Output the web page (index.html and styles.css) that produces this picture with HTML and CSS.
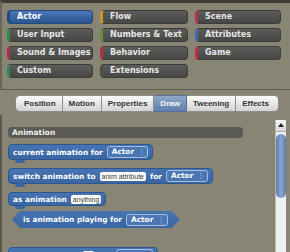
FILE: index.html
```html
<!DOCTYPE html>
<html lang="en">

<head>
    <meta charset="UTF-8">
    <title>Palette</title>
    <link rel="stylesheet" href="styles.css">
</head>

<body>
    <div class="palette">
        <div class="cat actor">Actor</div>
        <div class="cat flow">Flow</div>
        <div class="cat scene">Scene</div>
        <div class="cat input">User Input</div>
        <div class="cat numbers">Numbers &amp; Text</div>
        <div class="cat attributes">Attributes</div>
        <div class="cat sound">Sound &amp; Images</div>
        <div class="cat behavior">Behavior</div>
        <div class="cat game">Game</div>
        <div class="cat custom">Custom</div>
        <div class="cat extensions">Extensions</div>
    </div>

    <div class="tabs">
        <div class="tab">Position</div>
        <div class="tab">Motion</div>
        <div class="tab">Properties</div>
        <div class="tab active">Draw</div>
        <div class="tab">Tweening</div>
        <div class="tab">Effects</div>
    </div>

    <div class="panel">
        <div class="blocks">
            <div class="section">Animation</div>

            <div class="block">current animation for
                <span class="drop">Actor <span class="arrows">&#8942;</span></span>
            </div>

            <div class="block">switch animation to
                <span class="field">anim attribute</span> for
                <span class="drop">Actor <span class="arrows">&#8942;</span></span>
            </div>

            <div class="block short">as animation <span class="field">anything</span></div>

            <div class="block hex">is animation playing for
                <span class="drop">Actor <span class="arrows">&#8942;</span></span>
            </div>

            <div class="block cut">
                <span class="field blank"></span>
                <span class="drop wide"></span>
            </div>
        </div>

        <div class="scrollbar">
            <div class="up"></div>
            <div class="thumb"></div>
        </div>
    </div>

    <div class="footer"></div>
</body>

</html>
```

FILE: styles.css
```css
body {
    margin: 0;
    width: 290px;
    height: 252px;
    overflow: hidden;
    background-color: #888574;
    font-family: "DejaVu Sans", Verdana, sans-serif;
}

/* category buttons */
.palette {
    height: 79px;
    border-top: 3px solid #3f3d36;
    border-bottom: 1px solid #5f5c51;
    border-left: 2px solid #6a6759;
    padding: 7px 0 0 5px;
    box-sizing: content-box;
    display: grid;
    grid-template-columns: 86px 88px 86px;
    grid-auto-rows: 14px;
    gap: 4px 7px;
}

.cat {
    box-sizing: border-box;
    height: 14px;
    border: 1px solid #3c3c3a;
    border-left: 3px solid #555;
    border-radius: 4px;
    background: linear-gradient(#5c5c5a, #464644);
    color: #e6e6e6;
    font-size: 8px;
    font-weight: bold;
    line-height: 12px;
    padding-left: 7px;
    white-space: nowrap;
}

.cat.actor {
    background: linear-gradient(#4a78b8, #2b5490);
    border-color: #25487c;
    color: #fff;
}

.cat.flow { border-left-color: #c8952e; }
.cat.scene { border-left-color: #b8304c; }
.cat.input { border-left-color: #2f8a4a; }
.cat.numbers { border-left-color: #6b8a3c; }
.cat.attributes { border-left-color: #3b6cad; }
.cat.sound { border-left-color: #b02f48; }
.cat.behavior { border-left-color: #b52f42; }
.cat.game { border-left-color: #bb3044; }
.cat.custom { border-left-color: #2c8a58; }
.cat.extensions { border-left-color: #4d4d4b; }

/* tabs */
.tabs {
    display: flex;
    margin: 5px 0 0 15px;
    height: 17px;
}

.tab {
    box-sizing: border-box;
    height: 17px;
    padding: 0 6px;
    border: 1px solid #8d8d8d;
    border-left: none;
    background: linear-gradient(#fbfbfb, #d2d2d2);
    font-family: "Liberation Sans", Arial, sans-serif;
    font-size: 8px;
    font-weight: bold;
    line-height: 15px;
    color: #333;
}

.tab:first-child {
    border-left: 1px solid #8d8d8d;
    border-radius: 5px 0 0 5px;
    padding-left: 8px;
}

.tab:last-child {
    border-radius: 0 5px 5px 0;
    padding-right: 9px;
}

.tab.active {
    background: linear-gradient(#8fa7c8, #5f7fac);
    border-color: #56729a;
    color: #f4f6fa;
}

/* block list */
.panel {
    display: flex;
    height: 137px;
    margin-top: 3px;
    border-left: 2px solid #5a584e;
    overflow: hidden;
}

.blocks {
    flex: 1;
    padding: 12px 0 0 6px;
}

.section {
    width: 235px;
    height: 11px;
    box-sizing: border-box;
    padding-left: 4px;
    border-radius: 4px;
    background: #5b5a55;
    color: #f0f0f0;
    font-size: 7.5px;
    font-weight: bold;
    line-height: 11px;
}

.block {
    position: relative;
    display: flex;
    align-items: center;
    gap: 4px;
    width: fit-content;
    height: 16px;
    box-sizing: border-box;
    margin-top: 8px;
    padding: 0 4px 0 4px;
    border: 1px solid #30568e;
    border-radius: 4px;
    background: linear-gradient(#4674b2, #3a66a3);
    color: #fff;
    font-size: 7.4px;
    font-weight: bold;
    white-space: nowrap;
}

.block::after {
    content: "";
    position: absolute;
    left: 6px;
    bottom: -4px;
    width: 10px;
    height: 3px;
    border-radius: 0 0 2px 2px;
    background: #3a66a3;
}

.section + .block {
    margin-top: 6px;
}

.block.short {
    height: 14px;
}

.block.hex {
    margin: 5px 0 0 4px;
    height: 17px;
    padding: 0 12px 0 11px;
    border: none;
    border-radius: 0;
    clip-path: polygon(8px 0, calc(100% - 8px) 0, 100% 50%, calc(100% - 8px) 100%, 8px 100%, 0 50%);
}

.block.hex::after {
    display: none;
}

.block.cut {
    margin-top: 19px;
    width: 150px;
    gap: 0;
    padding-left: 74px;
}

.drop {
    display: inline-flex;
    align-items: center;
    gap: 4px;
    height: 10px;
    padding: 0 2px 0 4px;
    border: 1px solid #a9bedc;
    border-radius: 3px;
    background: #4a77b3;
    line-height: 10px;
}

.arrows {
    font-weight: normal;
    color: #c8d6ea;
}

.field {
    display: inline-block;
    height: 9px;
    padding: 0 2px;
    border-radius: 2px;
    background: #fff;
    color: #333;
    font-family: "Liberation Sans", Arial, sans-serif;
    font-size: 7px;
    font-weight: normal;
    line-height: 9px;
}

.field.blank {
    width: 8px;
}

.drop.wide {
    width: 34px;
    margin-left: 22px;
}

/* scrollbar */
.scrollbar {
    width: 10px;
    margin: 5px 4px 0 0;
    background: #eef0f2;
    border-left: 1px solid #b8b8b4;
}

.up {
    position: relative;
    height: 11px;
    background: linear-gradient(#f6f6f6, #d8d8d8);
    border-bottom: 1px solid #a9a9a9;
}

.up::after {
    content: "";
    position: absolute;
    left: 2px;
    top: 3px;
    border-left: 3px solid transparent;
    border-right: 3px solid transparent;
    border-bottom: 4px solid #222;
}

.thumb {
    height: 64px;
    margin: 2px 0 0 0;
    border-radius: 5px;
    background: linear-gradient(90deg, #5d7eae, #8aa6cf, #5d7eae);
}

.footer {
    height: 7px;
    background: #f3f3f3;
}
```
